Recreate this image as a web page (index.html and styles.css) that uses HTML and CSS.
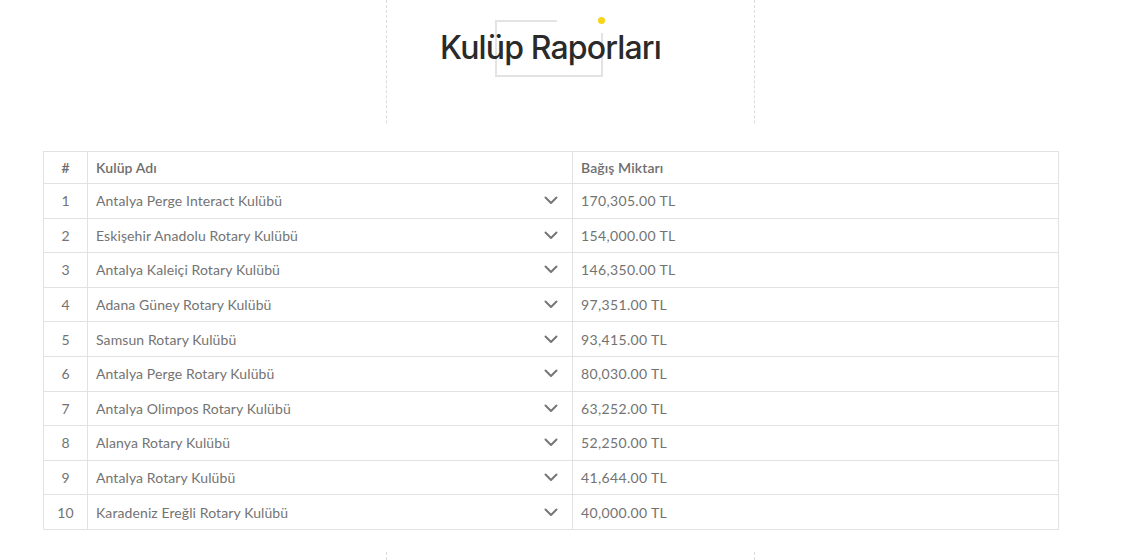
FILE: index.html
```html
<!DOCTYPE html>
<html lang="tr">
<head>
<meta charset="utf-8">
<title>Kulüp Raporları</title>
<link rel="stylesheet" href="styles.css">
</head>
<body>
<div class="page">
  <div class="grid-line line-left"></div>
  <div class="grid-line line-right"></div>
  <header class="hero">
    <div class="title-wrap">
      <span class="deco-box"></span>
      <span class="deco-dot"></span>
      <h1 class="title">Kulüp Raporları</h1>
    </div>
  </header>
  <section class="report">
    <table class="report-table">
      <thead>
        <tr><th class="col-no">#</th><th class="col-name">Kulüp Adı</th><th class="col-amount">Bağış Miktarı</th></tr>
      </thead>
      <tbody>
        <tr><td class="col-no">1</td><td class="col-name"><div class="name-cell"><span>Antalya Perge Interact Kulübü</span><svg class="chev" viewBox="0 0 14 9"><path d="M1.5 1.5 L7 7 L12.5 1.5"/></svg></div></td><td class="amount">170,305.00 TL</td></tr>
        <tr><td class="col-no">2</td><td class="col-name"><div class="name-cell"><span>Eskişehir Anadolu Rotary Kulübü</span><svg class="chev" viewBox="0 0 14 9"><path d="M1.5 1.5 L7 7 L12.5 1.5"/></svg></div></td><td class="amount">154,000.00 TL</td></tr>
        <tr><td class="col-no">3</td><td class="col-name"><div class="name-cell"><span>Antalya Kaleiçi Rotary Kulübü</span><svg class="chev" viewBox="0 0 14 9"><path d="M1.5 1.5 L7 7 L12.5 1.5"/></svg></div></td><td class="amount">146,350.00 TL</td></tr>
        <tr><td class="col-no">4</td><td class="col-name"><div class="name-cell"><span>Adana Güney Rotary Kulübü</span><svg class="chev" viewBox="0 0 14 9"><path d="M1.5 1.5 L7 7 L12.5 1.5"/></svg></div></td><td class="amount">97,351.00 TL</td></tr>
        <tr><td class="col-no">5</td><td class="col-name"><div class="name-cell"><span>Samsun Rotary Kulübü</span><svg class="chev" viewBox="0 0 14 9"><path d="M1.5 1.5 L7 7 L12.5 1.5"/></svg></div></td><td class="amount">93,415.00 TL</td></tr>
        <tr><td class="col-no">6</td><td class="col-name"><div class="name-cell"><span>Antalya Perge Rotary Kulübü</span><svg class="chev" viewBox="0 0 14 9"><path d="M1.5 1.5 L7 7 L12.5 1.5"/></svg></div></td><td class="amount">80,030.00 TL</td></tr>
        <tr><td class="col-no">7</td><td class="col-name"><div class="name-cell"><span>Antalya Olimpos Rotary Kulübü</span><svg class="chev" viewBox="0 0 14 9"><path d="M1.5 1.5 L7 7 L12.5 1.5"/></svg></div></td><td class="amount">63,252.00 TL</td></tr>
        <tr><td class="col-no">8</td><td class="col-name"><div class="name-cell"><span>Alanya Rotary Kulübü</span><svg class="chev" viewBox="0 0 14 9"><path d="M1.5 1.5 L7 7 L12.5 1.5"/></svg></div></td><td class="amount">52,250.00 TL</td></tr>
        <tr><td class="col-no">9</td><td class="col-name"><div class="name-cell"><span>Antalya Rotary Kulübü</span><svg class="chev" viewBox="0 0 14 9"><path d="M1.5 1.5 L7 7 L12.5 1.5"/></svg></div></td><td class="amount">41,644.00 TL</td></tr>
        <tr><td class="col-no">10</td><td class="col-name"><div class="name-cell"><span>Karadeniz Ereğli Rotary Kulübü</span><svg class="chev" viewBox="0 0 14 9"><path d="M1.5 1.5 L7 7 L12.5 1.5"/></svg></div></td><td class="amount">40,000.00 TL</td></tr>
      </tbody>
    </table>
  </section>
</div>
</body>
</html>
```

FILE: styles.css
```css
* { box-sizing: border-box; }
html, body { margin: 0; padding: 0; background: #fff; }
body {
  font-family: "Lato", "Open Sans", sans-serif;
  color: #707070;
  height: 560px;
  overflow: hidden;
}
.page {
  position: relative;
  min-height: 560px;
}
.grid-line {
  position: absolute;
  top: 0;
  bottom: 0;
  width: 0;
  border-left: 1px dashed #dcdcdc;
  z-index: 0;
}
.line-left { left: 386px; }
.line-right { left: 754px; }

.hero {
  position: relative;
  z-index: 1;
  height: 125px;
  display: flex;
  justify-content: center;
  padding-top: 26px;
  padding-right: 30px;
}
.title-wrap {
  position: relative;
  height: 44px;
}
.title {
  position: relative;
  margin: 0;
  font-family: "Inter", "Lato", sans-serif;
  font-weight: 500;
  font-size: 32px;
  letter-spacing: -0.85px;
  line-height: 44px;
  color: #2a2a2a;
  white-space: nowrap;
}
.deco-box {
  position: absolute;
  left: 55px;
  top: -6px;
  width: 108px;
  height: 57px;
  border-left: 2px solid #e3e3e3;
  border-bottom: 2px solid #e3e3e3;
}
.deco-box::before {
  content: "";
  position: absolute;
  left: 0;
  top: 0;
  width: 60px;
  border-top: 2px solid #e3e3e3;
}
.deco-box::after {
  content: "";
  position: absolute;
  right: 0;
  top: 13px;
  bottom: 0;
  border-right: 2px solid #e3e3e3;
}
.deco-dot {
  position: absolute;
  left: 158px;
  top: -9px;
  width: 7px;
  height: 7px;
  border-radius: 50%;
  background: #f7d417;
}

.report {
  position: relative;
  z-index: 1;
  background: #fff;
  padding: 26px 0 22px 43px;
}
.report-table {
  width: 1016px;
  border-collapse: collapse;
  font-size: 14px;
  letter-spacing: 0.1px;
  color: #737373;
}
.report-table th,
.report-table td {
  border: 1px solid #e2e2e2;
  text-align: left;
  padding: 0 8px;
  height: 34.6px;
  vertical-align: middle;
}
.report-table th {
  height: 32px;
  font-weight: 600;
  color: #6e6e6e;
}
.report-table .col-no {
  width: 44px;
  text-align: center;
  padding: 0;
}
.report-table .col-name {
  width: 485px;
}
.report-table .amount {
  letter-spacing: 0.35px;
}
.name-cell {
  display: flex;
  align-items: center;
  justify-content: space-between;
  padding-right: 6px;
}
.chev {
  width: 14px;
  height: 9px;
  fill: none;
  stroke: #767676;
  stroke-width: 2;
  stroke-linecap: round;
  stroke-linejoin: round;
}
```
